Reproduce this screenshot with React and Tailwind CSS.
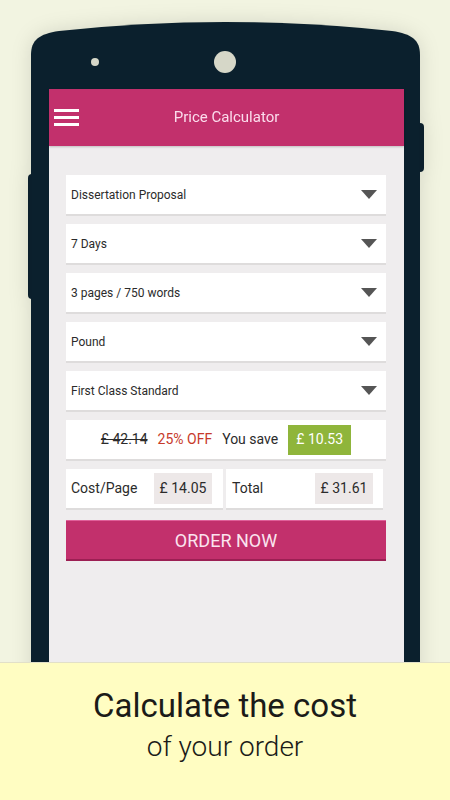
import React from 'react';

const fields = ['Dissertation Proposal', '7 Days', '3 pages / 750 words', 'Pound', 'First Class Standard'];

function Caret() {
  return (
    <svg width="16" height="9" viewBox="0 0 16 9" className="shrink-0">
      <path d="M0 0h16L8 9z" fill="#555555" />
    </svg>
  );
}

function Select({ label }) {
  return (
    <div className="h-[41px] bg-white border-b-2 border-[#dedcdc] flex items-center justify-between pl-[5px] pr-[9px]">
      <span className="text-[12px] text-[#2b2b2b]">{label}</span>
      <Caret />
    </div>
  );
}

export default function App() {
  return (
    <div className="w-[450px] h-[800px] overflow-hidden flex flex-col bg-[#f2f4e1]" style={{ fontFamily: 'Roboto, "Noto Sans", sans-serif' }}>
      <div className="h-[662px] overflow-hidden pt-[22px] pl-[31px]">
        <div className="relative w-[389px] drop-shadow-[0_0_10px_rgba(0,0,0,0.12)]">
          <span className="absolute left-[-3px] top-[152px] w-[4px] h-[125px] bg-[#0b1f2c] rounded-l-sm" />
          <span className="absolute left-[388px] top-[101px] w-[5px] h-[49px] bg-[#0b1f2c] rounded-r-sm" />
          <svg width="389" height="67" viewBox="0 0 389 67" className="block">
            <path d="M0 67V33C0 18 8 12 28 9Q194 -9 361 9C381 12 389 18 389 33V67Z" fill="#0b202d" />
            <circle cx="64" cy="40" r="4" fill="#d6d7c8" />
            <circle cx="194" cy="40" r="11" fill="#d6d7c8" />
          </svg>
          <div className="bg-[#0b202d] pl-[18px] pr-[16px] h-[620px]">
            <div className="bg-[#efedee] h-full flex flex-col">
              <div className="h-[57px] bg-[#c2306c] relative flex items-center justify-center shadow-[0_1px_2px_rgba(0,0,0,0.2)]">
                <div className="absolute left-[5px] top-[20px] flex flex-col gap-[4px]">
                  <span className="block w-[25px] h-[3px] bg-white" />
                  <span className="block w-[25px] h-[3px] bg-white" />
                  <span className="block w-[25px] h-[3px] bg-white" />
                </div>
                <span className="text-[15px] text-[#fbdcec]">Price Calculator</span>
              </div>
              <div className="pt-[29px] pl-[17px] pr-[18px] flex flex-col gap-[8px]">
                {fields.map((f) => (
                  <Select key={f} label={f} />
                ))}
                <div className="h-[41px] bg-white border-b-2 border-[#dedcdc] flex items-center justify-center text-[14px] text-[#2b2b2b]">
                  <span className="line-through">£ 42.14</span>
                  <span className="ml-[10px] text-[#c73a2b]">25% OFF</span>
                  <span className="ml-[10px]">You save</span>
                  <span className="ml-[10px] h-[30px] w-[63px] bg-[#8fb53b] text-white flex items-center justify-center">£ 10.53</span>
                </div>
                <div className="flex gap-[3px] pr-[3px]">
                  <div className="flex-1 h-[41px] bg-white border-b-2 border-[#dedcdc] flex items-center justify-between pl-[5px] pr-[11px] text-[14px] text-[#2b2b2b]">
                    <span>Cost/Page</span>
                    <span className="h-[31px] w-[58px] bg-[#ede8e8] flex items-center justify-center">£ 14.05</span>
                  </div>
                  <div className="flex-1 h-[41px] bg-white border-b-2 border-[#dedcdc] flex items-center justify-between pl-[6px] pr-[10px] text-[14px] text-[#2b2b2b]">
                    <span>Total</span>
                    <span className="h-[31px] w-[58px] bg-[#ede8e8] flex items-center justify-center">£ 31.61</span>
                  </div>
                </div>
                <button className="mt-[2px] h-[41px] bg-[#c2306c] border-t border-[#e0609a] border-b-2 border-b-[#9c1f53] text-[18px] text-[#fbe4ef] flex items-center justify-center">
                  ORDER NOW
                </button>
              </div>
            </div>
          </div>
        </div>
      </div>
      <div className="flex-1 bg-[#fffdc2] border-t border-[#e2e0c8] flex flex-col items-center pt-[23px]">
        <span className="text-[33px] leading-[40px] text-[#1b1b18]">Calculate the cost</span>
        <span className="text-[28px] leading-[36px] font-light text-[#1b1b18] mt-[3px]">of your order</span>
      </div>
    </div>
  );
}
